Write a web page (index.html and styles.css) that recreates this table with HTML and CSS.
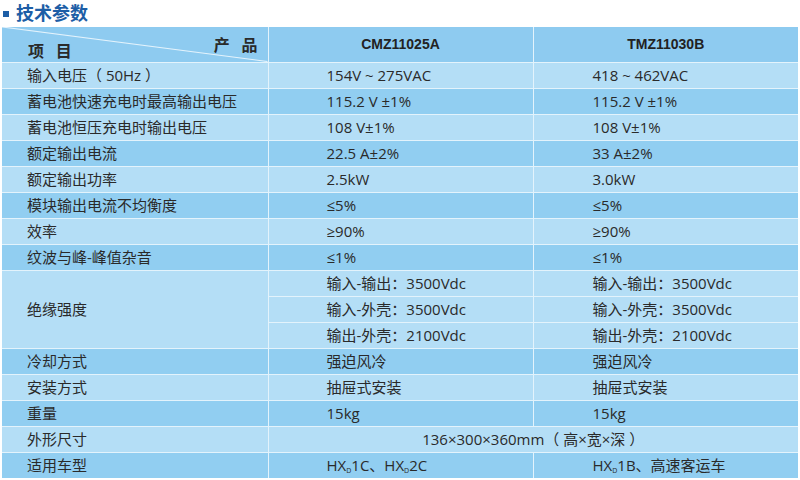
FILE: index.html
```html
<!DOCTYPE html>
<html lang="zh-CN">
<head>
<meta charset="utf-8">
<title>技术参数</title>
<link rel="stylesheet" href="styles.css">
</head>
<body>
<h1 class="title"><span class="title-mark"></span>技术参数</h1>
<table class="spec">
  <colgroup>
    <col class="c1"><col class="c2"><col class="c3">
  </colgroup>
  <thead>
    <tr class="head">
      <th class="corner">
        <svg class="diag" viewBox="0 0 266 35" preserveAspectRatio="none"><line x1="0" y1="0" x2="266" y2="35" stroke="#e4f3fc" stroke-width="1.2"/></svg>
        <span class="corner-prod">产&nbsp;品</span>
        <span class="corner-item">项&nbsp;目</span>
      </th>
      <th class="model">CMZ11025A</th>
      <th class="model">TMZ11030B</th>
    </tr>
  </thead>
  <tbody>
    <tr class="lt"><td class="k">输入电压（ 50Hz ）</td><td class="v1">154V ~ 275VAC</td><td class="v2">418 ~ 462VAC</td></tr>
    <tr class="dk"><td class="k">蓄电池快速充电时最高输出电压</td><td class="v1">115.2 V ±1%</td><td class="v2">115.2 V ±1%</td></tr>
    <tr class="lt"><td class="k">蓄电池恒压充电时输出电压</td><td class="v1">108 V±1%</td><td class="v2">108 V±1%</td></tr>
    <tr class="dk"><td class="k">额定输出电流</td><td class="v1">22.5 A±2%</td><td class="v2">33 A±2%</td></tr>
    <tr class="lt"><td class="k">额定输出功率</td><td class="v1">2.5kW</td><td class="v2">3.0kW</td></tr>
    <tr class="dk"><td class="k">模块输出电流不均衡度</td><td class="v1">≤5%</td><td class="v2">≤5%</td></tr>
    <tr class="lt"><td class="k">效率</td><td class="v1">≥90%</td><td class="v2">≥90%</td></tr>
    <tr class="dk"><td class="k">纹波与峰-峰值杂音</td><td class="v1">≤1%</td><td class="v2">≤1%</td></tr>
    <tr class="lt"><td class="k" rowspan="3">绝缘强度</td><td class="v1">输入-输出：3500Vdc</td><td class="v2">输入-输出：3500Vdc</td></tr>
    <tr class="lt"><td class="v1">输入-外壳：3500Vdc</td><td class="v2">输入-外壳：3500Vdc</td></tr>
    <tr class="lt"><td class="v1">输出-外壳：2100Vdc</td><td class="v2">输出-外壳：2100Vdc</td></tr>
    <tr class="dk"><td class="k">冷却方式</td><td class="v1">强迫风冷</td><td class="v2">强迫风冷</td></tr>
    <tr class="lt"><td class="k">安装方式</td><td class="v1">抽屉式安装</td><td class="v2">抽屉式安装</td></tr>
    <tr class="dk"><td class="k">重量</td><td class="v1">15kg</td><td class="v2">15kg</td></tr>
    <tr class="lt"><td class="k">外形尺寸</td><td class="span" colspan="2">136×300×360mm（ 高×宽×深 ）</td></tr>
    <tr class="dk"><td class="k">适用车型</td><td class="v1">HX<sub class="sub">D</sub>1C、HX<sub class="sub">D</sub>2C</td><td class="v2">HX<sub class="sub">D</sub>1B、高速客运车</td></tr>
  </tbody>
</table>
</body>
</html>
```
FILE: styles.css
```css
html, body {
  margin: 0;
  padding: 0;
  background: #ffffff;
}
body {
  width: 800px;
  height: 480px;
  overflow: hidden;
  padding: 0 2px;
  box-sizing: border-box;
  font-family: "Open Sans", "Noto Sans CJK SC", sans-serif;
  color: #2a2a2a;
}
.title {
  margin: 0;
  height: 27px;
  display: flex;
  align-items: center;
  gap: 7px;
  padding-left: 1px;
  padding-bottom: 4px;
  box-sizing: border-box;
  font-family: "Noto Sans CJK SC", sans-serif;
  font-size: 18px;
  font-weight: 700;
  line-height: 1;
  color: #1d5ea6;
}
.title-mark {
  width: 6px;
  height: 6px;
  background: #1d5ea6;
  margin-top: 4px;
}
.spec {
  width: 796px;
  border-collapse: collapse;
  table-layout: fixed;
  font-size: 15px;
  line-height: 1;
}
.c1 { width: 266px; }
.c2 { width: 265px; }
.c3 { width: 265px; }
.spec th, .spec td {
  border: 1.5px solid #e3f3fc;
  padding: 0;
  white-space: nowrap;
}
.spec tr:first-child th { border-top: 0; }
.spec th:first-child, .spec td.k { border-left: 0; }
.spec th:last-child, .spec td:last-child { border-right: 0; }
.spec tbody tr:last-child td { border-bottom: 0; }
.head {
  height: 35px;
  background: #8ecbf0;
}
.corner {
  position: relative;
  padding: 0;
}
.diag {
  position: absolute;
  left: 0;
  top: 0;
  width: 100%;
  height: 100%;
}
.corner-prod, .corner-item {
  position: absolute;
  font-family: "Noto Sans CJK SC", sans-serif;
  font-size: 16px;
  font-weight: 700;
  word-spacing: 8px;
}
.corner-prod {
  right: 10px;
  top: 9px;
}
.corner-item {
  left: 26px;
  top: 15px;
}
.model {
  font-family: "Liberation Sans", "Noto Sans", sans-serif;
  font-size: 14px;
  font-weight: 700;
  text-align: center;
  color: #222;
  padding-bottom: 2px;
}
.spec tbody tr {
  height: 26px;
}
.lt { background: #b4def6; }
.dk { background: #91cef1; }
.k { padding-left: 25px !important; text-align: left; }
.v1 { padding-left: 58px !important; }
.v2 { padding-left: 59px !important; }
.span { text-align: center; }
td.k[rowspan] { background: #b4def6; }
.sub {
  font-size: 7px;
  vertical-align: -2px;
  line-height: 0;
}
```
